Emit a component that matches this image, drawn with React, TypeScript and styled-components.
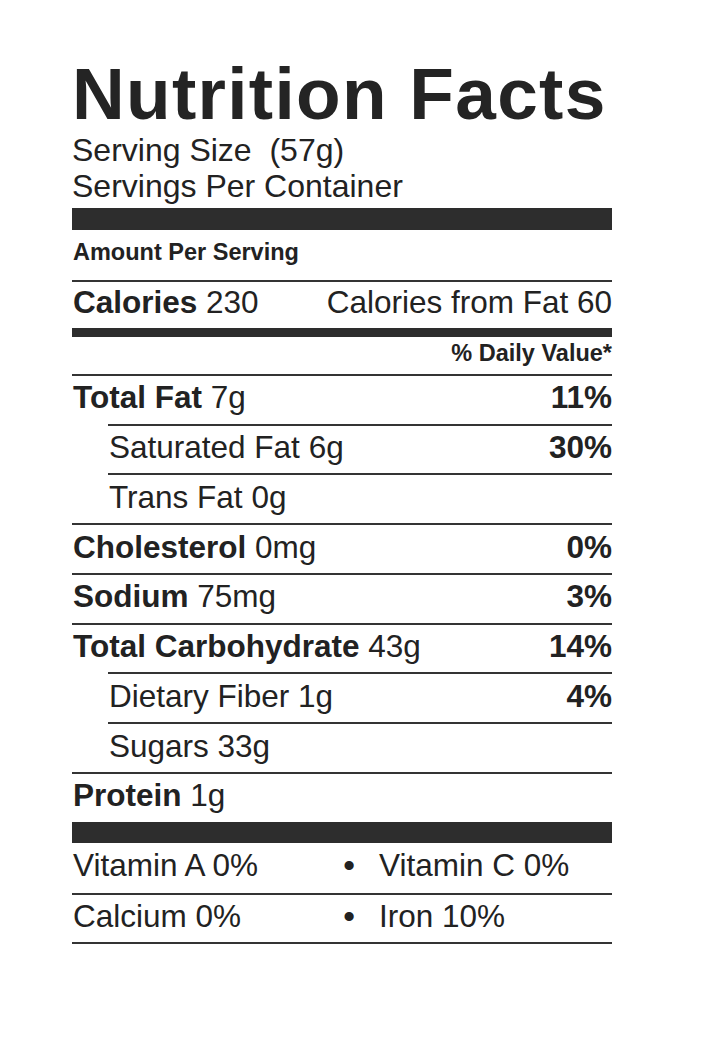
import React from "react";
import styled, { createGlobalStyle } from "styled-components";

const Global = createGlobalStyle`
  html, body { margin: 0; padding: 0; background: #ffffff; }
  body {
    font-family: "Liberation Sans", Arial, Helvetica, sans-serif;
    color: #222222;
  }
`;

const Page = styled.div`
  width: 717px;
  min-height: 1041px;
  box-sizing: border-box;
  padding-top: 57.6px;
  background: #ffffff;
`;

const Label = styled.section`
  width: 540px;
  margin-left: 72px;
  display: flex;
  flex-direction: column;
`;

const Title = styled.h1`
  margin: 0;
  font-size: 73px;
  line-height: 71px;
  font-weight: 700;
  letter-spacing: 1.3px;
  white-space: nowrap;
  color: #242424;
`;

const Serving = styled.div`
  margin-top: 3.3px;
  font-size: 32px;
  line-height: 36px;
  white-space: pre;
`;

const Bar = styled.div<{ $h: number; $gap?: number }>`
  height: ${(p) => p.$h}px;
  margin-top: ${(p) => p.$gap ?? 0}px;
  background: #2d2d2d;
`;

const Row = styled.div<{
  $h?: number;
  $indent?: boolean;
  $top?: boolean;
  $bottom?: boolean;
  $small?: boolean;
  $end?: boolean;
}>`
  box-sizing: border-box;
  display: flex;
  align-items: center;
  justify-content: ${(p) => (p.$end ? "flex-end" : "space-between")};
  height: ${(p) => p.$h ?? 49.75}px;
  margin-left: ${(p) => (p.$indent ? 36 : 0)}px;
  padding: 0 0 4px 1px;
  border-top: ${(p) => (p.$top ? "2px solid #343434" : "none")};
  border-bottom: ${(p) => (p.$bottom ? "2px solid #343434" : "none")};
  font-size: ${(p) => (p.$small ? 23.5 : 31.5)}px;
  font-weight: ${(p) => (p.$small ? 700 : 400)};
  white-space: nowrap;
`;

const B = styled.span`
  font-weight: 700;
`;

const Pct = styled.span`
  font-weight: 700;
`;

const VitRow = styled.div<{ $h: number; $top?: boolean; $bottom?: boolean }>`
  box-sizing: border-box;
  display: grid;
  grid-template-columns: 262px 28px 1fr;
  align-items: center;
  height: ${(p) => p.$h}px;
  padding: 0 0 4px 1px;
  border-top: ${(p) => (p.$top ? "2px solid #343434" : "none")};
  border-bottom: ${(p) => (p.$bottom ? "2px solid #343434" : "none")};
  font-size: 31.5px;
  white-space: nowrap;
`;

const Dot = styled.span`
  text-align: center;
  font-size: 32px;
  font-weight: 700;
`;

const VitRight = styled.span`
  padding-left: 16px;
`;

type Nutrient = {
  name: string;
  amount: string;
  dv?: string;
  sub?: boolean;
};

const nutrients: Nutrient[] = [
  { name: "Total Fat", amount: "7g", dv: "11%" },
  { name: "Saturated Fat", amount: "6g", dv: "30%", sub: true },
  { name: "Trans Fat", amount: "0g", sub: true },
  { name: "Cholesterol", amount: "0mg", dv: "0%" },
  { name: "Sodium", amount: "75mg", dv: "3%" },
  { name: "Total Carbohydrate", amount: "43g", dv: "14%" },
  { name: "Dietary Fiber", amount: "1g", dv: "4%", sub: true },
  { name: "Sugars", amount: "33g", sub: true },
];

export default function App() {
  return (
    <Page>
      <Global />
      <Label>
        <Title>Nutrition Facts</Title>
        <Serving>
          {"Serving Size  (57g)"}
          <br />
          {"Servings Per Container"}
        </Serving>
        <Bar $h={22} $gap={4.1} />
        <Row $h={50} $small>
          Amount Per Serving
        </Row>
        <Row $h={48} $top>
          <span>
            <B>Calories</B> 230
          </span>
          <span>Calories from Fat 60</span>
        </Row>
        <Bar $h={9} />
        <Row $h={37} $small $end>
          % Daily Value*
        </Row>
        {nutrients.map((n) => (
          <Row key={n.name} $top $indent={n.sub}>
            <span>
              {n.sub ? n.name : <B>{n.name}</B>} {n.amount}
            </span>
            {n.dv && <Pct>{n.dv}</Pct>}
          </Row>
        ))}
        <Row $h={50} $top>
          <span>
            <B>Protein</B> 1g
          </span>
        </Row>
        <Bar $h={21} />
        <VitRow $h={50}>
          <span>Vitamin A 0%</span>
          <Dot>•</Dot>
          <VitRight>Vitamin C 0%</VitRight>
        </VitRow>
        <VitRow $h={51} $top $bottom>
          <span>Calcium 0%</span>
          <Dot>•</Dot>
          <VitRight>Iron 10%</VitRight>
        </VitRow>
      </Label>
    </Page>
  );
}
